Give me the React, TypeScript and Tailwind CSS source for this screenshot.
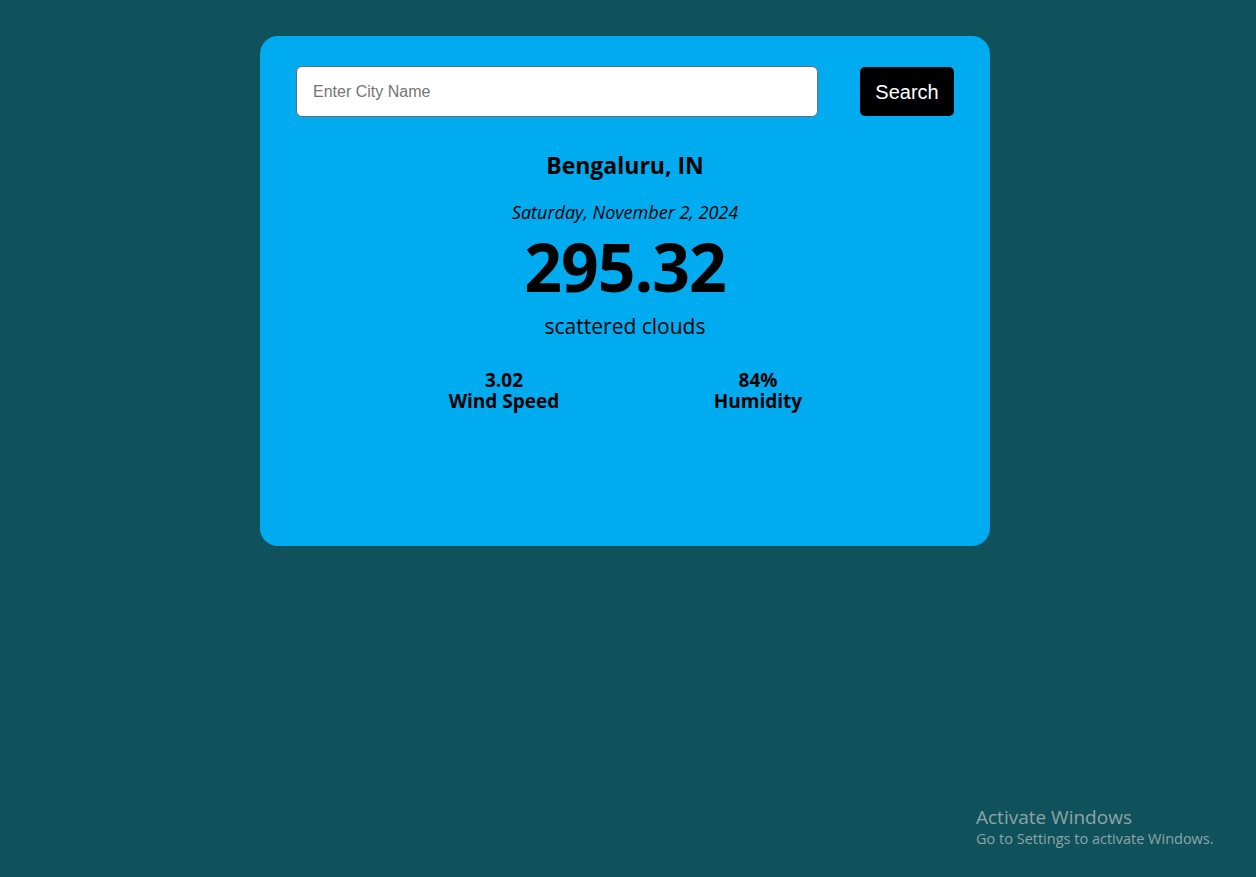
const App = () => {
  return (
    <div className="relative min-h-[877px] w-full bg-[#0f525b] pt-9 font-['Open_Sans',sans-serif]">
      <div className="ml-[260px] flex h-[510px] w-[730px] flex-col items-center rounded-[18px] bg-[#00abf0] px-9 pt-[30px]">
        <div className="flex w-full items-center justify-between">
          <input
            className="h-[51px] w-[522px] rounded-md border border-[#6b6b6b] bg-white px-4 font-['Liberation_Sans',sans-serif] text-base text-black placeholder:text-[#757575] outline-none"
            placeholder="Enter City Name"
          />
          <button className="h-[49px] w-[94px] rounded-[5px] bg-black font-['Liberation_Sans',sans-serif] text-xl text-white">
            Search
          </button>
        </div>

        <h2 className="mt-[34px] text-[23px] font-bold leading-7 text-black">Bengaluru, IN</h2>
        <p className="mt-[21px] text-[18px] italic leading-6 text-black">Saturday, November 2, 2024</p>
        <h1 className="mt-[4px] text-[66px] font-bold leading-[76px] tracking-[-1px] text-black">295.32</h1>
        <p className="mt-[8px] text-[21px] leading-7 text-black">scattered clouds</p>

        <div className="mt-[30px] flex w-full text-[19px] font-bold leading-[21px] text-black">
          <div className="ml-[133px] flex w-[150px] flex-col items-center">
            <span>3.02</span>
            <span>Wind Speed</span>
          </div>
          <div className="ml-[104px] flex w-[150px] flex-col items-center">
            <span>84%</span>
            <span>Humidity</span>
          </div>
        </div>
      </div>

      <div className="absolute left-[976px] top-[805px] text-[#8fa4a7]">
        <div className="text-[19px] leading-6">Activate Windows</div>
        <div className="text-[14.5px] leading-5">Go to Settings to activate Windows.</div>
      </div>
    </div>
  );
};

export default App;
